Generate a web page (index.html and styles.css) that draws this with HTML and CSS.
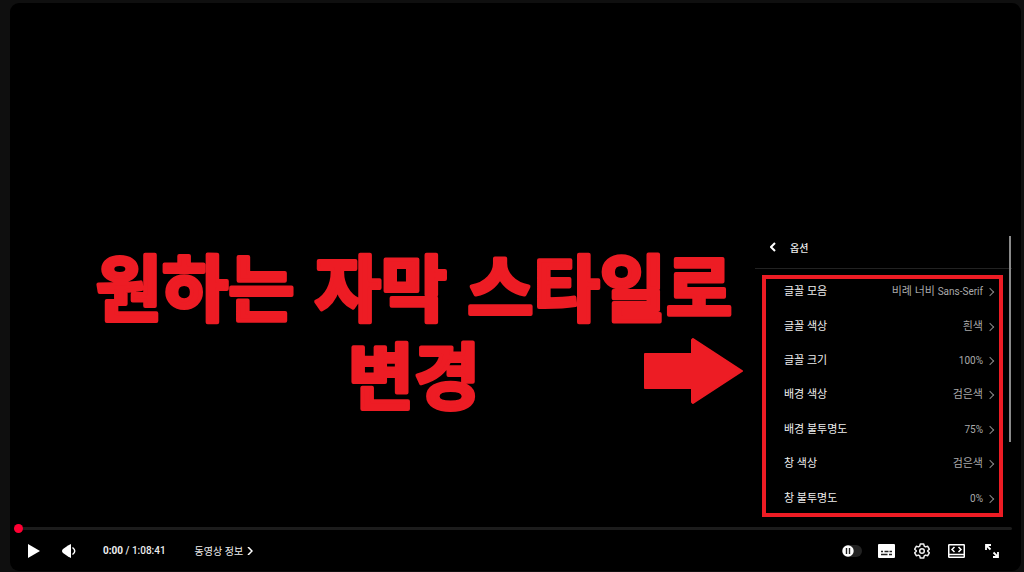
FILE: index.html
```html
<!DOCTYPE html>
<html lang="ko">
<head>
    <meta charset="UTF-8">
    <meta name="viewport" content="width=device-width, initial-scale=1.0">
    <title>자막 옵션</title>
    <link rel="stylesheet" href="styles.css">
</head>
<body>
    <main class="player">
        <div class="stage">
            <div class="caption">
                <h1>
                    <svg class="headline" viewBox="0 0 648 176">
                        <text x="324" y="69">원하는 자막 스타일로</text>
                        <text x="324" y="157">변경</text>
                    </svg>
                </h1>
                <svg class="arrow" viewBox="0 0 100 66" aria-hidden="true">
                    <path d="M2 16H49V2L50 1L99 33L50 65L49 64V50H2Z" fill="#ed1c24" stroke="#ed1c24" stroke-width="2" stroke-linejoin="round"/>
                </svg>
            </div>
            <section class="menu">
                <header class="menu-header">
                    <button class="back" aria-label="뒤로">
                        <svg width="6" height="10" viewBox="0 0 6 10"><path d="M5 1L1 5L5 9" fill="none" stroke="#fff" stroke-width="2"/></svg>
                    </button>
                    <h2>옵션</h2>
                </header>
                <div class="options">
                    <button class="option"><span>글꼴 모음</span><span class="value"><span>비례 너비 <small>Sans-Serif</small></span></span></button>
                    <button class="option"><span>글꼴 색상</span><span class="value">흰색</span></button>
                    <button class="option"><span>글꼴 크기</span><span class="value"><small>100%</small></span></button>
                    <button class="option"><span>배경 색상</span><span class="value">검은색</span></button>
                    <button class="option"><span>배경 불투명도</span><span class="value"><small>75%</small></span></button>
                    <button class="option"><span>창 색상</span><span class="value">검은색</span></button>
                    <button class="option"><span>창 불투명도</span><span class="value"><small>0%</small></span></button>
                    <div class="highlight"></div>
                </div>
                <div class="scrollbar"></div>
            </section>
        </div>
        <input class="progress" type="range" min="0" max="4121" value="0" aria-label="탐색">
        <div class="controls">
            <button class="icon-btn" aria-label="재생">
                <svg width="12" height="14" viewBox="0 0 12 14"><path d="M0 0L12 7L0 14Z" fill="#fff"/></svg>
            </button>
            <button class="icon-btn" aria-label="음소거">
                <svg width="14" height="14" viewBox="0 0 14 14"><path d="M9 0V14L6 12.500L1 9Q-1 7 1 5L6 1.500Z" fill="#fff"/><path d="M10.500 3.500Q15 7 10.500 10.500" fill="none" stroke="#fff" stroke-width="1.500"/></svg>
            </button>
            <div class="time"><b>0:00</b> / 1:08:41</div>
            <button class="info">동영상 정보
                <svg width="6" height="8" viewBox="0 0 6 8"><path d="M1 0L5 4L1 8" fill="none" stroke="#fff" stroke-width="1.500"/></svg>
            </button>
            <div class="right">
                <label class="toggle">
                    <input type="checkbox" aria-label="자동재생">
                    <svg class="knob" width="12" height="12" viewBox="0 0 12 12"><circle cx="6" cy="6" r="5.700" fill="#fff"/><path d="M4.500 3V9M7.500 3V9" stroke="#222" stroke-width="1.400"/></svg>
                </label>
                <button class="icon-btn" aria-label="자막">
                    <svg width="17" height="14" viewBox="0 0 17 14"><rect width="17" height="14" rx="1" fill="#fff"/><path d="M3 7.500H5M6.500 7.500H10.500M11.500 7.500H14M3 10.500H9.500M11 10.500H14" stroke="#222" stroke-width="1.400"/></svg>
                </button>
                <button class="icon-btn" aria-label="설정">
                    <svg width="16" height="16" viewBox="0 0 16 16" fill="none" stroke="#eee" stroke-width="1.500" stroke-linejoin="round"><path d="M6.300 1H9.700L10.300 3.200L11.500 3.900L13.700 3.300L15.300 6.200L13.700 7.800V8.200L15.300 9.800L13.700 12.700L11.500 12.100L10.300 12.800L9.700 15H6.300L5.700 12.800L4.500 12.100L2.300 12.700L.7 9.800L2.300 8.200V7.800L.7 6.200L2.300 3.300L4.500 3.900L5.700 3.200Z"/><circle cx="8" cy="8" r="2.300"/></svg>
                </button>
                <button class="icon-btn" aria-label="영화관 모드">
                    <svg width="17" height="14" viewBox="0 0 17 14" fill="none" stroke="#fff" stroke-width="1.500"><rect x=".75" y=".75" width="15.500" height="12.500" rx=".5"/><path d="M1 10.500H16"/><path d="M6.500 3L4 5.500L6.500 8M10.500 3L13 5.500L10.500 8"/></svg>
                </button>
                <button class="icon-btn" aria-label="전체 화면">
                    <svg width="14" height="14" viewBox="0 0 14 14" fill="none" stroke="#fff" stroke-width="1.800"><path d="M1 6V1H6M1 1L5.500 5.500M13 8V13H8M13 13L8.500 8.500"/></svg>
                </button>
            </div>
        </div>
    </main>
</body>
</html>
```
FILE: styles.css
```css
* {
    box-sizing: border-box;
}

body {
    margin: 0;
    padding: 3px 3px 1px 10px;
    height: 100vh;
    display: flex;
    background: #0f0f0f;
    color: #eeeeee;
    font-family: Roboto, 'Noto Sans CJK KR', sans-serif;
    font-size: 11px;
}

button {
    padding: 0;
    border: 0;
    background: none;
    color: inherit;
    font: inherit;
    cursor: pointer;
}

svg {
    display: block;
}

.player {
    flex: 1;
    display: flex;
    flex-direction: column;
    background: #000000;
    border-radius: 9px;
}

.stage {
    flex: 1;
    display: flex;
    align-items: flex-end;
    padding: 0 9px 11px 0;
}

.caption {
    flex: 1;
    position: relative;
    padding: 0 17px 94px 80px;
}

.caption h1 {
    margin: 0;
}

.headline {
    width: 100%;
    overflow: visible;
    fill: #ed1c24;
    stroke: #ed1c24;
    stroke-width: 4px;
    stroke-linejoin: round;
    font-family: 'Noto Sans CJK KR', sans-serif;
    font-size: 72px;
    font-weight: 700;
    text-anchor: middle;
}

.arrow {
    position: absolute;
    right: 12px;
    bottom: 112px;
    width: 100px;
    height: 66px;
}

.menu {
    position: relative;
    width: 257px;
}

.menu-header {
    display: flex;
    align-items: center;
    gap: 10px;
    height: 43px;
    padding-left: 11px;
    border-bottom: 1px solid #222222;
}

.menu-header h2 {
    margin: 0;
    font-size: 10px;
    font-weight: 500;
}

.back {
    display: grid;
    place-items: center;
    width: 14px;
    height: 24px;
}

.options {
    position: relative;
    display: grid;
    grid-auto-rows: 1fr;
    height: 247px;
    padding-top: 6px;
}

.option {
    display: flex;
    align-items: center;
    justify-content: space-between;
    padding: 0 19px 0 29px;
    line-height: 16px;
}

.value {
    display: flex;
    align-items: center;
    gap: 4px;
    color: #aaaaaa;
}

.value small {
    font-size: 10px;
}

.value::after {
    content: '';
    width: 5px;
    height: 5px;
    border: solid #888888;
    border-width: 1px 1px 0 0;
    transform: rotate(45deg);
}

.highlight {
    position: absolute;
    top: 6px;
    right: 9px;
    bottom: -1px;
    left: 7px;
    border: 4px solid #ed1c24;
    pointer-events: none;
}

.scrollbar {
    position: absolute;
    top: 10px;
    right: 1px;
    width: 2px;
    height: 206px;
    background: #8a8a8a;
}

.progress {
    appearance: none;
    height: 3px;
    margin: 0 9px 0 4px;
    background: #1c1c1c;
    border-radius: 2px;
}

.progress::-webkit-slider-thumb {
    appearance: none;
    width: 9px;
    height: 9px;
    border-radius: 50%;
    background: #ff0033;
}

.controls {
    display: flex;
    align-items: center;
    height: 41px;
    padding: 0 12px 0 6px;
}

.icon-btn {
    display: grid;
    place-items: center;
    width: 35px;
    height: 32px;
}

.time {
    margin: 0 29px 0 17px;
    font-size: 10px;
    font-weight: 500;
}

.time b {
    font-weight: 700;
}

.info {
    display: flex;
    align-items: center;
    gap: 4px;
    font-size: 10px;
}

.right {
    display: flex;
    align-items: center;
    margin-left: auto;
}

.toggle {
    position: relative;
    margin-right: 7px;
}

.toggle input {
    display: block;
    appearance: none;
    width: 20px;
    height: 12px;
    margin: 0;
    border-radius: 6px;
    background: #222222;
}

.knob {
    position: absolute;
    top: 0;
    left: 0;
}
```
